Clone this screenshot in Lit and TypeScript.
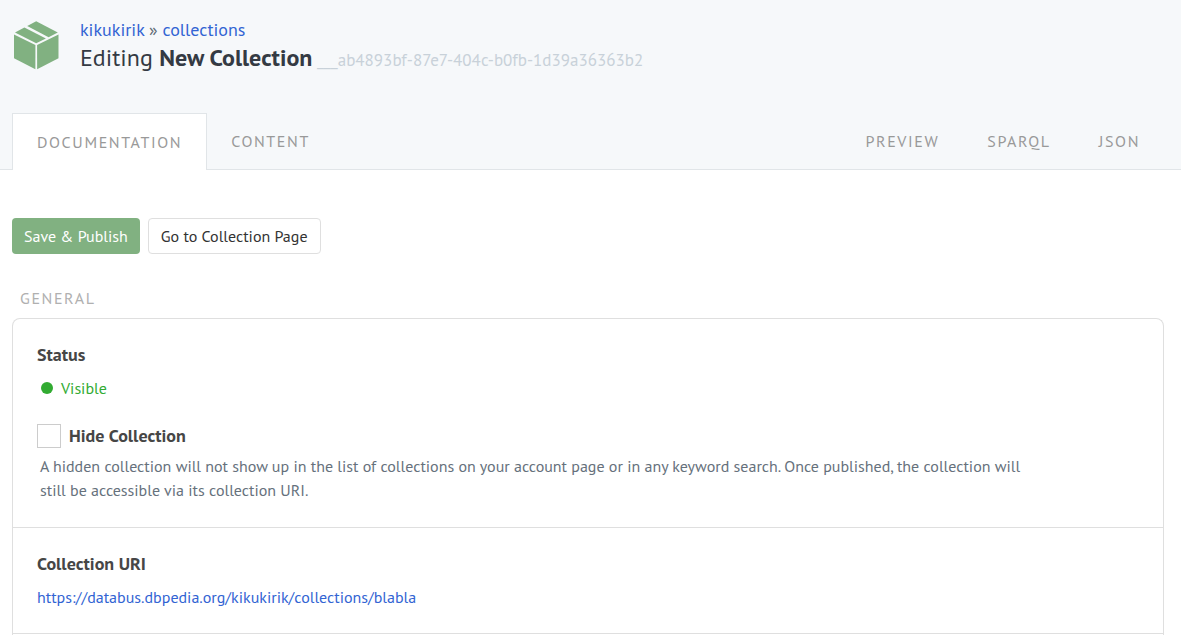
import { LitElement, html, css } from "lit";
import { customElement, state } from "lit/decorators.js";

@customElement("app-root")
export class AppRoot extends LitElement {
  static styles = css`
    :host {
      display: flex;
      flex-direction: column;
      min-height: 100vh;
      background: #fff;
      color: #464646;
      font-family: "PT Sans", "Noto Sans", sans-serif;
      font-size: 16px;
      line-height: 24px;
    }
    * { box-sizing: border-box; }
    a { color: #3264d3; text-decoration: none; }
    h1, h2, h3, p { margin: 0; }
    header {
      background: #f6f8fa;
      border-bottom: 1px solid #e1e5e8;
      padding: 18px 17px 0 12px;
    }
    .title { display: flex; gap: 20px; }
    .logo { width: 48px; height: 54px; flex: none; }
    .crumbs { font-size: 18px; color: #5f6b76; }
    h1 {
      font-size: 24px;
      line-height: 32px;
      font-weight: 400;
      color: #343a43;
    }
    .uuid { font-size: 17px; color: #c8d1d9; }
    nav { display: flex; margin-top: 37px; margin-bottom: -1px; }
    .tab {
      padding: 15px 24px 16px;
      border-top: 1px solid transparent;
      letter-spacing: 0.1em;
      color: #999;
    }
    .tab.active {
      padding-top: 16px;
      background: #fff;
      border: 1px solid #e1e5e8;
      border-bottom: 0;
    }
    .push { margin-left: auto; }
    main {
      flex: 1;
      display: flex;
      flex-direction: column;
      padding: 48px 17px 0 12px;
    }
    .actions { display: flex; gap: 8px; }
    button {
      height: 36px;
      padding: 0 12px;
      border: 1px solid #dfdfdf;
      border-radius: 4px;
      background: #fff;
      color: #333;
      font: inherit;
    }
    .primary { background: #81b181; border: 0; color: #fff; }
    h2 {
      margin-top: 32px;
      padding-left: 8px;
      font-size: 16px;
      font-weight: 400;
      letter-spacing: 0.1em;
      color: #b0b0b0;
    }
    .card {
      flex: 1;
      margin-top: 8px;
      border: 1px solid #dfdfdf;
      border-bottom: 0;
      border-radius: 8px 8px 0 0;
    }
    section { padding: 24px; border-bottom: 1px solid #dfdfdf; }
    h3, label { font-size: 18px; font-weight: 700; }
    .value { margin-top: 9px; }
    .status {
      display: flex;
      align-items: center;
      gap: 8px;
      padding-left: 4px;
      color: #32ab32;
    }
    .dot { width: 12px; height: 12px; border-radius: 50%; background: currentColor; }
    .check { display: flex; align-items: center; gap: 8px; margin-top: 24px; }
    input {
      appearance: none;
      width: 24px;
      height: 24px;
      margin: 0;
      border: 1px solid #ccc;
      background: #fff;
    }
    input:checked { background: #81b181; }
    .help {
      max-width: 1000px;
      margin-top: 6px;
      padding: 0 3px 1px;
      color: #66717c;
    }
  `;

  @state() private concealed = false;

  render() {
    return html`
      <header>
        <div class="title">
          <svg class="logo" viewBox="0 0 48 54" fill="#81b181" aria-hidden="true">
            <path d="M24.2 3.2 45.8 14.6 36.6 19.3 15.2 7.9Z" />
            <path d="M12.4 9.4 33.9 20.6 24.2 25.2 3 14.6Z" />
            <path d="M2 16.6 23.4 27V51.2L2 40.2Z" />
            <path d="M46.5 16.6 25.1 27V51.2L46.5 40.2Z" />
          </svg>
          <div>
            <div class="crumbs"><a href="#kikukirik">kikukirik</a> » <a href="#collections">collections</a></div>
            <h1>Editing <b>New Collection</b><span class="uuid"> ___ab4893bf-87e7-404c-b0fb-1d39a36363b2</span></h1>
          </div>
        </div>
        <nav>
          <a class="tab active" href="#documentation">DOCUMENTATION</a>
          <a class="tab" href="#content">CONTENT</a>
          <a class="tab push" href="#preview">PREVIEW</a>
          <a class="tab" href="#sparql">SPARQL</a>
          <a class="tab" href="#json">JSON</a>
        </nav>
      </header>
      <main>
        <div class="actions">
          <button class="primary">Save &amp; Publish</button>
          <button>Go to Collection Page</button>
        </div>
        <h2>GENERAL</h2>
        <div class="card">
          <section>
            <h3>Status</h3>
            <div class="value status"><span class="dot"></span>Visible</div>
            <div class="check">
              <input id="hide" type="checkbox" .checked=${this.concealed}
                @change=${(e: Event) => (this.concealed = (e.target as HTMLInputElement).checked)} />
              <label for="hide">Hide Collection</label>
            </div>
            <p class="help">A hidden collection will not show up in the list of collections on your account page or in any keyword search. Once published, the collection will still be accessible via its collection URI.</p>
          </section>
          <section>
            <h3>Collection URI</h3>
            <p class="value"><a href="https://databus.dbpedia.org/kikukirik/collections/blabla">https://databus.dbpedia.org/kikukirik/collections/blabla</a></p>
          </section>
        </div>
      </main>
    `;
  }
}
